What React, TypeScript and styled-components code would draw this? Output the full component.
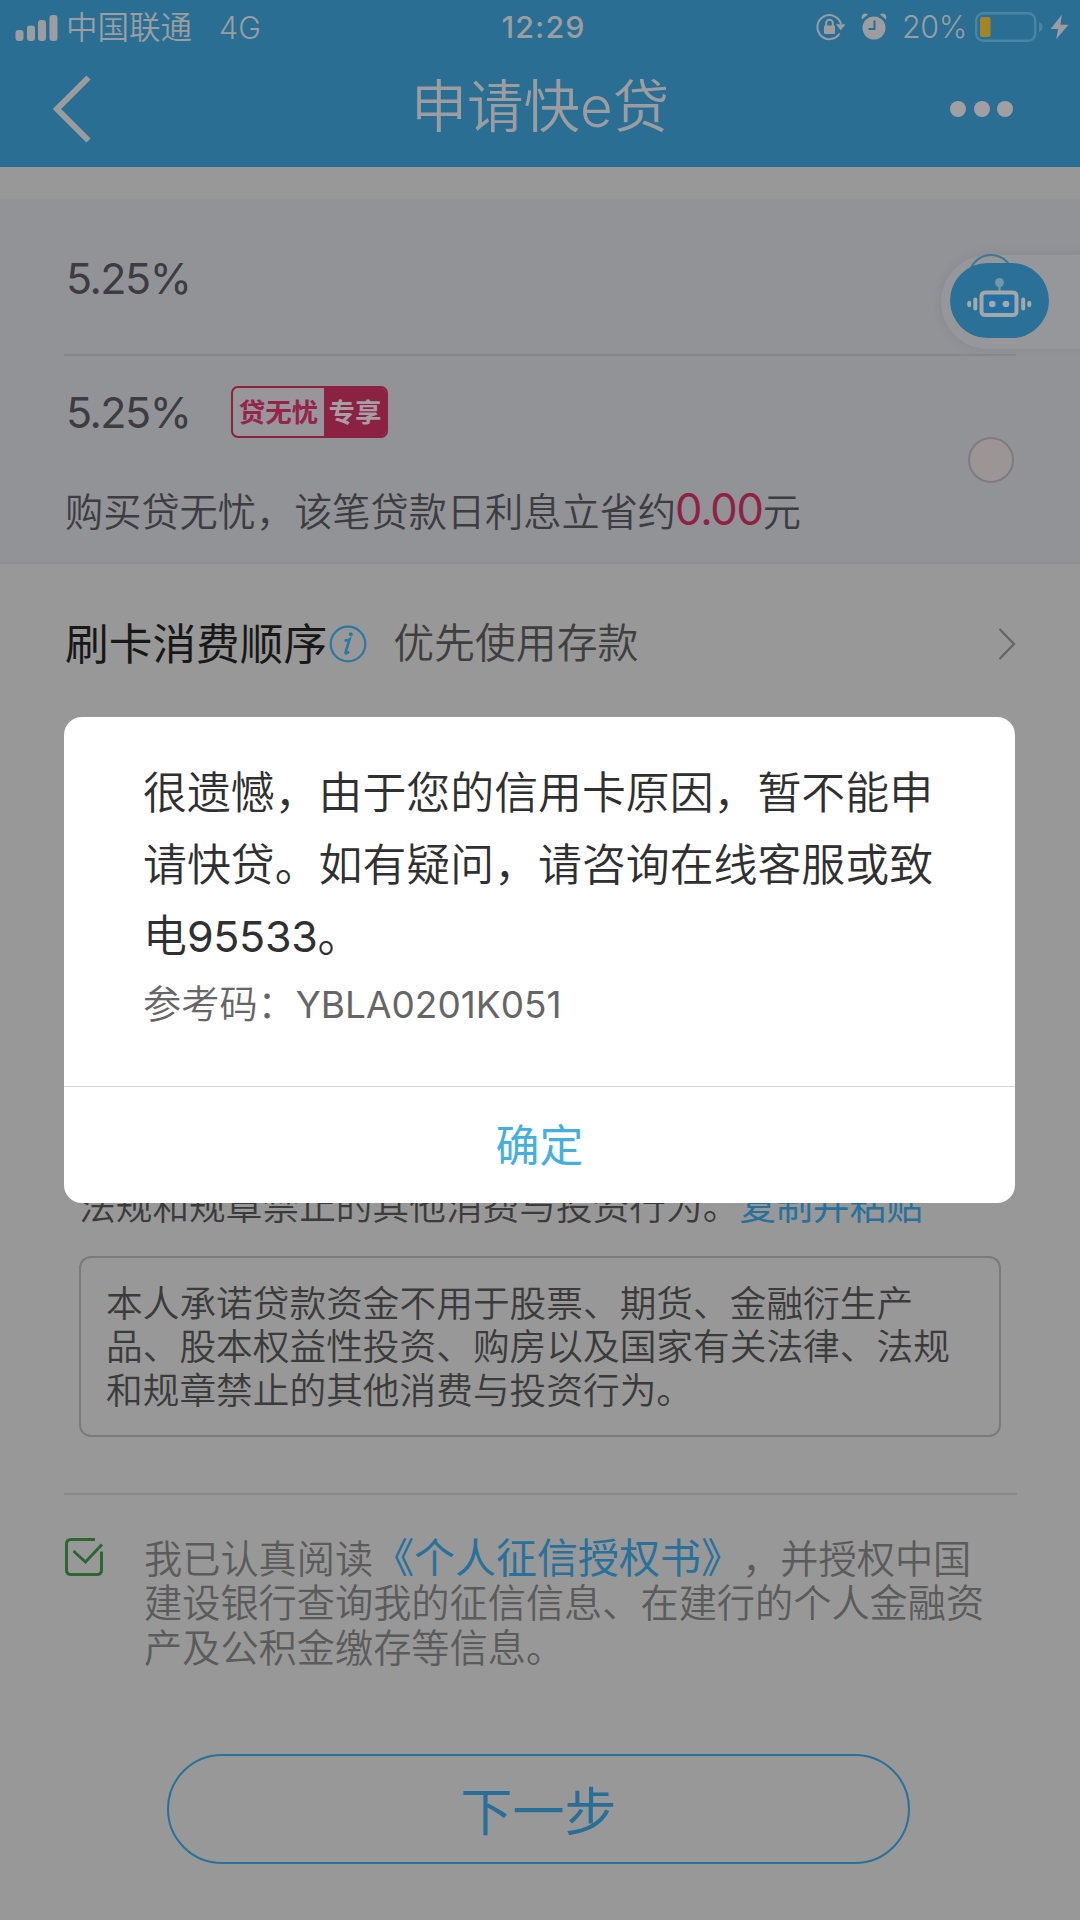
import React from "react";
import styled, { createGlobalStyle } from "styled-components";

const SKY = "#2a6e94";
const PAPER = "#989898";
const HEAD_TEXT = "#9b9da0";

const GlobalStyle = createGlobalStyle`
  * { box-sizing: border-box; }
  body {
    margin: 0;
    background: ${PAPER};
    font-family: "Inter", "Noto Sans CJK SC", sans-serif;
    font-weight: 350;
    text-spacing-trim: space-all;
  }
  p { margin: 0; }
  button { font: inherit; background: none; border: 0; padding: 0; }
`;

const Screen = styled.main`
  position: relative;
  display: flex;
  flex-direction: column;
  width: 1080px;
  height: 1920px;
  overflow: hidden;
  background: ${PAPER};
  white-space: nowrap;
`;

const Header = styled.header`
  height: 167px;
  flex: none;
  background: ${SKY};
  color: ${HEAD_TEXT};
`;

const StatusBar = styled.div`
  display: grid;
  grid-template-columns: 1fr auto 1fr;
  align-items: center;
  height: 54px;
  padding: 0 11px 0 15px;
  font-size: 31px;
  line-height: 54px;
`;

const StatusLeft = styled.div`
  display: flex;
  align-items: center;
`;

const Carrier = styled.span`
  margin-left: 7px;
  padding-top: 1px;
  font-size: 31.5px;
`;

const Network = styled.span`
  margin-left: 27px;
  font-size: 30.5px;
`;

const Clock = styled.span`
  margin: -1px 0 0 3px;
  font-size: 30.5px;
  font-weight: 550;
  letter-spacing: 1.1px;
`;

const StatusRight = styled.div`
  display: flex;
  align-items: center;
  justify-content: flex-end;
  margin-top: -2px;
`;

const StatusIcon = styled.span<{ $gap: number }>`
  display: flex;
  margin-right: ${(p) => p.$gap}px;
`;

const Percent = styled.span`
  width: 65px;
  margin-right: 8px;
  font-size: 30.5px;
  letter-spacing: -0.4px;
`;

const NavBar = styled.div`
  display: grid;
  grid-template-columns: 200px 1fr 200px;
  align-items: center;
  height: 110px;
`;

const BackButton = styled.button`
  display: flex;
  margin-left: 50px;
`;

const Title = styled.h1`
  margin: -5px 0 0;
  text-align: center;
  font-size: 56.5px;
  font-weight: 350;
  line-height: 76px;
`;

const MoreButton = styled.button`
  display: flex;
  gap: 7.5px;
  margin-left: 70px;
`;

const Dot = styled.i`
  width: 16px;
  height: 16px;
  border-radius: 50%;
  background: #a19fa2;
`;

const RatePanel = styled.section`
  display: flex;
  flex-direction: column;
  flex: none;
  height: 365px;
  margin-top: 32px;
  padding: 0 64px;
  background: #929397;
  border-bottom: 2px solid #8e8e91;
  color: #3c3c41;
`;

const RateRow = styled.div<{ $tall?: boolean }>`
  display: flex;
  align-items: center;
  justify-content: space-between;
  height: ${(p) => (p.$tall ? 207 : 157)}px;
  padding-top: ${(p) => (p.$tall ? 3 : 3)}px;
  padding-right: 2px;
  border-bottom: ${(p) => (p.$tall ? "0" : "2px solid #88898d")};
`;

const RateInfo = styled.div`
  display: flex;
  flex-direction: column;
`;

const RateLine = styled.div`
  display: flex;
  align-items: center;
  height: 56px;
  padding-top: 2px;
`;

const Rate = styled.span`
  width: 167px;
  padding-left: 2px;
  font-size: 43px;
  font-weight: 390;
  letter-spacing: -1.5px;
`;

const Badge = styled.span`
  display: flex;
  width: 157px;
  height: 52px;
  border: 2px solid #8b2143;
  border-radius: 7px;
  overflow: hidden;
  background: #98969a;
  color: #96234a;
  font-size: 26.5px;
  font-weight: 700;
  line-height: 49px;
`;

const BadgeName = styled.span`
  flex: 1;
  text-align: center;
`;

const BadgeTag = styled.span`
  width: 62px;
  background: #8b2143;
  color: #a79da3;
  text-align: center;
`;

const Saving = styled.p`
  display: flex;
  align-items: center;
  height: 56px;
  margin-top: 42px;
  padding-left: 1px;
  font-size: 38.2px;
`;

const Amount = styled.span`
  margin-left: -1px;
  color: #8f2145;
  font-size: 43.5px;
  font-weight: 400;
  letter-spacing: -1.2px;
`;

const Radio = styled.i`
  width: 46px;
  height: 46px;
  border-radius: 50%;
  border: 2px solid #7f7b81;
  background: #9b9596;
`;

const Assistant = styled.aside`
  position: absolute;
  top: 255px;
  right: 0;
  display: flex;
  align-items: center;
  width: 139px;
  height: 94px;
  padding: 0 0 3px 9px;
  border-radius: 47px 0 0 47px;
  background: #96979a;
  box-shadow: 0 0 7px 2px rgba(110, 110, 118, 0.2);
`;

const Ring = styled.i`
  position: absolute;
  left: 27px;
  top: -1px;
  width: 46px;
  height: 46px;
  border: 2px solid #3d7895;
  border-radius: 50%;
`;

const AssistantFace = styled.span`
  position: relative;
  display: flex;
  justify-content: center;
  width: 99px;
  height: 75px;
  border-radius: 37.5px;
  background: #2a7097;
`;

const OrderRow = styled.section`
  display: flex;
  align-items: center;
  flex: none;
  height: 159px;
  padding: 0 64px 0 65px;
  color: #181818;
  font-size: 43.7px;
`;

const OrderLabel = styled.span`
  margin: -6px 2px 0 0;
  font-weight: 400;
`;

const OrderValue = styled.span`
  flex: 1;
  margin: -6px 0 0 26px;
  color: #3f3f3f;
  font-size: 40.9px;
`;

const Pledge = styled.section`
  display: flex;
  flex-direction: column;
  flex: none;
  margin: 457px 63px 0 64px;
  padding: 0 15px;
  height: 315px;
  border-bottom: 2px solid #888;
  color: #3b3b3b;
  font-size: 36.7px;
`;

const PledgeTail = styled.p`
  height: 50px;
  line-height: 54px;
`;

const Link = styled.a<{ $large?: boolean }>`
  color: #29719b;
  font-size: ${(p) => (p.$large ? "41px" : "inherit")};
  font-weight: 400;
`;

const PledgeBox = styled.div`
  display: flex;
  flex-direction: column;
  justify-content: center;
  width: 922px;
  height: 181px;
  margin-top: 26px;
  padding: 1px 0 0 25px;
  border: 2px solid #7b7b7b;
  border-radius: 12px;
  line-height: 43.4px;
`;

const Consent = styled.section`
  display: flex;
  align-items: flex-start;
  flex: none;
  height: 134px;
  margin-top: 42px;
  padding-left: 64px;
  color: #5b5b5b;
  font-size: 38.2px;
`;

const ConsentText = styled.div`
  margin: -1px 0 0 40px;
`;

const ConsentLine = styled.p`
  height: 44.8px;
  line-height: 44.8px;
`;

const NextButton = styled.button`
  flex: none;
  width: 743px;
  height: 110px;
  margin: 83px 0 0 167px;
  padding-bottom: 1px;
  border: 2.5px solid #29719b;
  border-radius: 55px;
  color: #286e98;
  font-size: 52px;
  font-weight: 400;
`;

const Dialog = styled.div`
  position: absolute;
  top: 717px;
  left: 64px;
  display: flex;
  flex-direction: column;
  width: 951px;
  height: 486px;
  border-radius: 18px;
  background: #fff;
`;

const DialogBody = styled.div`
  flex: 1;
  padding: 41px 0 0 79px;
  color: #303030;
  font-size: 43.9px;
  line-height: 71.5px;
`;

const Hotline = styled.span`
  font-size: 43px;
  letter-spacing: -0.3px;
  font-weight: 400;
`;

const RefCode = styled.p`
  margin-top: -2px;
  color: #666;
  font-size: 38.2px;
  line-height: 66px;
`;

const Code = styled.span`
  font-size: 37px;
  font-weight: 390;
`;

const Confirm = styled.button`
  height: 117px;
  padding-bottom: 5px;
  border-top: 1px solid #d4d4d4;
  color: #43b0e0;
  font-size: 43.9px;
  font-weight: 400;
`;

const SignalIcon = () => (
  <svg width="44" height="28" viewBox="0 0 44 28" fill={HEAD_TEXT}>
    <rect x="0.5" y="16" width="8" height="11" rx="3" />
    <rect x="12" y="11.5" width="8" height="15.5" rx="3" />
    <rect x="23" y="6" width="8" height="21" rx="3" />
    <rect x="34.5" y="1" width="8" height="26" rx="3" />
  </svg>
);

const LockIcon = () => (
  <svg width="32" height="30" viewBox="0 0 32 30" fill="none" stroke={HEAD_TEXT}>
    <path d="M24.6 21.5A12 12 0 1 1 26 12" strokeWidth="2" />
    <path d="M21 12.2h9.5l-4.8 6z" fill={HEAD_TEXT} stroke="none" />
    <rect x="9" y="13.5" width="11" height="8.5" rx="1" fill={HEAD_TEXT} stroke="none" />
    <path d="M11.2 14v-3a3.3 3.3 0 0 1 6.6 0v3" strokeWidth="2" />
  </svg>
);

const AlarmIcon = () => (
  <svg width="28" height="30" viewBox="0 0 28 30" fill={HEAD_TEXT}>
    <circle cx="14" cy="16" r="11.5" />
    <path d="M2 7.5 8.2 2.2Q4.5.8 2.6 2.5 1 4.5 2 7.5zM26 7.5 19.8 2.2Q23.5.8 25.4 2.5 27 4.5 26 7.5z" />
    <path d="M14.500 8.500v8.500H8.500" stroke={SKY} strokeWidth="2" fill="none" />
  </svg>
);

const BatteryIcon = () => (
  <svg width="68" height="30" viewBox="0 0 68 30">
    <rect x="1.2" y="1.2" width="59" height="27.6" rx="7" fill="none" stroke="#4986a5" strokeWidth="2.4" />
    <path d="M64 10q3.5 1.5 3.5 5T64 20z" fill="#4986a5" />
    <rect x="5" y="5" width="10.5" height="20" rx="2" fill="#a58424" />
  </svg>
);

const BoltIcon = () => (
  <svg width="19" height="26" viewBox="0 0 20 26" fill={HEAD_TEXT}>
    <path d="M12.5 0 .5 15h8L6.5 26 19.5 10.500h-8.500z" />
  </svg>
);

const BackIcon = () => (
  <svg width="44" height="70" viewBox="0 0 44 70" fill="none" stroke="#9a9c9e" strokeWidth="6">
    <path d="M38.5 3.5 7 35l31.5 31.5" />
  </svg>
);

const RobotIcon = () => (
  <svg width="66" height="75" viewBox="0 0 66 75" fill="#a2aaae">
    <circle cx="32.5" cy="19.5" r="4.5" fill="#6f99ac" />
    <path d="M31.300 22h2.400v7h-2.400z" fill="#6f99ac" />
    <rect x="14.500" y="29.500" width="35" height="22.500" rx="3.500" fill="#2470a2" stroke="#a2a7aa" strokeWidth="4" />
    <circle cx="25.300" cy="41" r="3.300" />
    <circle cx="39" cy="41" r="3.300" />
    <rect x="6.300" y="34.500" width="4" height="13" rx="2" />
    <ellipse cx="2.200" cy="41" rx="2" ry="3.300" />
    <rect x="54.200" y="34.500" width="4" height="13" rx="2" />
    <ellipse cx="62.300" cy="41" rx="2" ry="3.300" />
  </svg>
);

const InfoIcon = () => (
  <svg width="38" height="38" viewBox="0 0 38 38" fill="none" stroke="#2c78a3">
    <circle cx="19" cy="19" r="17.3" strokeWidth="2.2" />
    <circle cx="21.8" cy="9.2" r="2" fill="#2c78a3" stroke="none" />
    <path d="M15.500 15.500q3.500 0 5-1l-4 13q-.4 2.300 3.700-.8" strokeWidth="2.600" />
  </svg>
);

const ChevronIcon = () => (
  <svg width="18" height="34" viewBox="0 0 18 34" fill="none" stroke="#646464" strokeWidth="2.2">
    <path d="m1.500 2 14.500 15L1.500 32" />
  </svg>
);

const CheckIcon = () => (
  <svg width="40" height="40" viewBox="0 0 40 40" fill="none" stroke="#2e6632" strokeWidth="3">
    <path d="M31 2.500H7Q2.500 2.500 2.500 7v26q0 4.500 4.500 4.500h26q4.500 0 4.500-4.500V14.500" />
    <path d="m9.500 14 12 11L38 7.500" />
  </svg>
);

export default function App() {
  return (
    <>
      <GlobalStyle />
      <Screen>
        <Header>
          <StatusBar>
            <StatusLeft>
              <SignalIcon />
              <Carrier>中国联通</Carrier>
              <Network>4G</Network>
            </StatusLeft>
            <Clock>12:29</Clock>
            <StatusRight>
              <StatusIcon $gap={13}>
                <LockIcon />
              </StatusIcon>
              <StatusIcon $gap={14}>
                <AlarmIcon />
              </StatusIcon>
              <Percent>20%</Percent>
              <StatusIcon $gap={7}>
                <BatteryIcon />
              </StatusIcon>
              <BoltIcon />
            </StatusRight>
          </StatusBar>
          <NavBar>
            <BackButton>
              <BackIcon />
            </BackButton>
            <Title>申请快e贷</Title>
            <MoreButton>
              <Dot />
              <Dot />
              <Dot />
            </MoreButton>
          </NavBar>
        </Header>

        <RatePanel>
          <RateRow>
            <Rate>5.25%</Rate>
          </RateRow>
          <RateRow $tall>
            <RateInfo>
              <RateLine>
                <Rate>5.25%</Rate>
                <Badge>
                  <BadgeName>贷无忧</BadgeName>
                  <BadgeTag>专享</BadgeTag>
                </Badge>
              </RateLine>
              <Saving>
                购买贷无忧，该笔贷款日利息立省约<Amount>0.00</Amount>元
              </Saving>
            </RateInfo>
            <Radio />
          </RateRow>
        </RatePanel>

        <OrderRow>
          <OrderLabel>刷卡消费顺序</OrderLabel>
          <InfoIcon />
          <OrderValue>优先使用存款</OrderValue>
          <ChevronIcon />
        </OrderRow>

        <Pledge>
          <PledgeTail>
            法规和规章禁止的其他消费与投资行为。<Link>复制并粘贴</Link>
          </PledgeTail>
          <PledgeBox>
            <p>本人承诺贷款资金不用于股票、期货、金融衍生产</p>
            <p>品、股本权益性投资、购房以及国家有关法律、法规</p>
            <p>和规章禁止的其他消费与投资行为。</p>
          </PledgeBox>
        </Pledge>

        <Consent>
          <CheckIcon />
          <ConsentText>
            <ConsentLine>
              我已认真阅读<Link $large>《个人征信授权书》</Link>，并授权中国
            </ConsentLine>
            <ConsentLine>建设银行查询我的征信信息、在建行的个人金融资</ConsentLine>
            <ConsentLine>产及公积金缴存等信息。</ConsentLine>
          </ConsentText>
        </Consent>

        <NextButton>下一步</NextButton>

        <Assistant>
          <Ring />
          <AssistantFace>
            <RobotIcon />
          </AssistantFace>
        </Assistant>

        <Dialog role="dialog">
          <DialogBody>
            <p>很遗憾，由于您的信用卡原因，暂不能申</p>
            <p>请快贷。如有疑问，请咨询在线客服或致</p>
            <p>
              电<Hotline>95533</Hotline>。
            </p>
            <RefCode>
              参考码：<Code>YBLA0201K051</Code>
            </RefCode>
          </DialogBody>
          <Confirm>确定</Confirm>
        </Dialog>
      </Screen>
    </>
  );
}
